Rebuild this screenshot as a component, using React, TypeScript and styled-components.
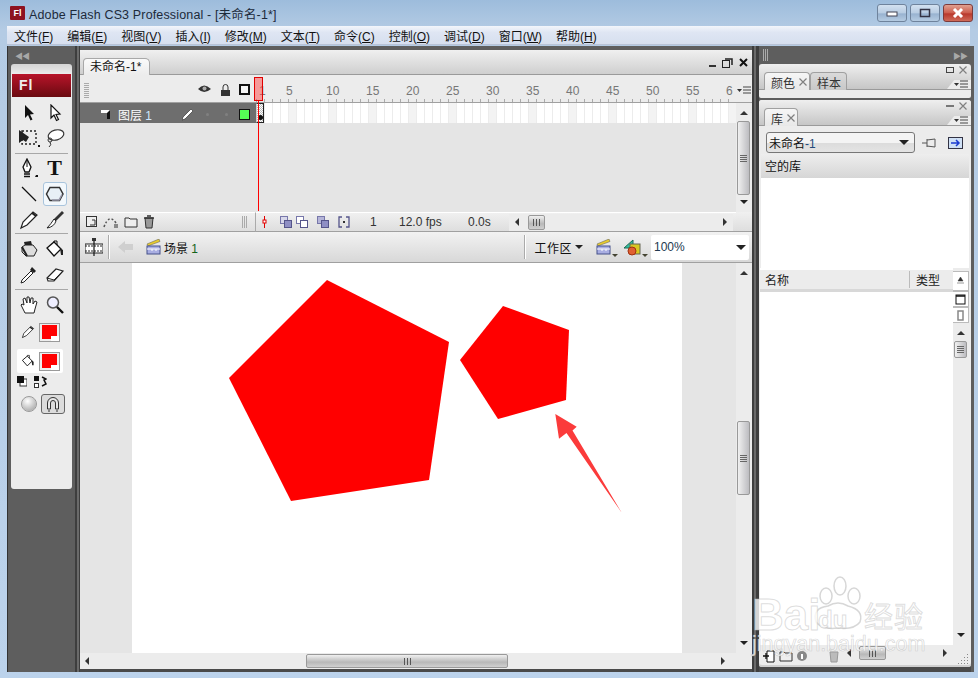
import React from "react";
import styled, { createGlobalStyle } from "styled-components";

const GlobalStyle = createGlobalStyle`
  html, body {
    margin: 0;
    padding: 0;
    width: 978px;
    height: 678px;
    overflow: hidden;
    font-family: "Liberation Sans", "Noto Sans CJK SC", sans-serif;
  }
  * { box-sizing: border-box; }
`;

const MENUS = [
  ["文件(", "F", ")"],
  ["编辑(", "E", ")"],
  ["视图(", "V", ")"],
  ["插入(", "I", ")"],
  ["修改(", "M", ")"],
  ["文本(", "T", ")"],
  ["命令(", "C", ")"],
  ["控制(", "O", ")"],
  ["调试(", "D", ")"],
  ["窗口(", "W", ")"],
  ["帮助(", "H", ")"],
];

const RULER = [5, 10, 15, 20, 25, 30, 35, 40, 45, 50, 55, 6];

const IconSvg = styled.svg`
  display: block;
  flex: none;
`;

const Svg = ({ w = 18, h = 18, children }: { w?: number; h?: number; children: React.ReactNode }) => (
  <IconSvg width={w} height={h} viewBox={`0 0 ${w} ${h}`}>
    {children}
  </IconSvg>
);

function ArrowTool() {
  return <Svg><path d="M5 1 L5 14 L8 11 L10.5 16.5 L12.5 15.5 L10 10.5 L14 10 Z" fill="#111" /></Svg>;
}
function SubArrowTool() {
  return <Svg><path d="M5 1 L5 14 L8 11 L10.5 16.5 L12.5 15.5 L10 10.5 L14 10 Z" fill="#fff" stroke="#111" strokeWidth="1.2" /></Svg>;
}
function FreeTransformTool() {
  return (
    <Svg w={22} h={20}>
      <rect x="4" y="3" width="14" height="13" fill="none" stroke="#222" strokeDasharray="2 2" strokeWidth="1.4" />
      <path d="M1 2 L1 15 L5 12 L8 14 L11 9 Z" fill="#222" />
      <path d="M20 17 L22 17 L22 19 L20 19 Z" fill="#111" />
    </Svg>
  );
}
function LassoTool() {
  return (
    <Svg w={20} h={20}>
      <ellipse cx="11" cy="7" rx="8" ry="5" fill="#fff" stroke="#333" strokeWidth="1.2" transform="rotate(-15 11 7)" />
      <circle cx="5" cy="12" r="2" fill="none" stroke="#333" />
      <path d="M5 14 Q7 17 4 19" fill="none" stroke="#333" />
    </Svg>
  );
}
function PenTool() {
  return (
    <Svg w={20} h={20}>
      <path d="M8 1 L12 9 L10 14 L6 14 L4 9 Z" fill="#fff" stroke="#111" strokeWidth="1.3" />
      <path d="M8 2 L8 9" stroke="#111" />
      <path d="M5 16 L11 16 M5 18.5 L11 18.5" stroke="#111" strokeWidth="1.4" />
      <path d="M17 17 L19 17 L19 19 L16 19 Z" fill="#111" />
    </Svg>
  );
}
function LineTool() {
  return <Svg><path d="M2 2 L16 16" stroke="#111" strokeWidth="1.2" /></Svg>;
}
function HexTool() {
  return (
    <Svg w={20} h={18}>
      <path d="M5 2.5 L14.5 2.5 L18 9 L14.5 15.5 L5 15.5 L1.5 9 Z" fill="#e8f0f6" stroke="#333" strokeWidth="1.5" />
      <path d="M7 15 L14 15 L17 9.5" fill="none" stroke="#99a" strokeWidth="1.5" />
    </Svg>
  );
}
function PencilTool() {
  return (
    <Svg w={20} h={20}>
      <path d="M2 18 L4 12 L14 2 L18 5 L8 15 Z" fill="#fff" stroke="#222" strokeWidth="1.2" />
      <path d="M13 3 L17 6" stroke="#222" strokeWidth="2" />
    </Svg>
  );
}
function BrushTool() {
  return (
    <Svg w={20} h={20}>
      <path d="M9 9 L17 1 L19 3 L11 11 Z" fill="#333" />
      <path d="M9 9 L11 11 Q9 17 2 18 Q6 14 9 9 Z" fill="#fff" stroke="#222" />
    </Svg>
  );
}
function InkTool() {
  return (
    <Svg w={20} h={18}>
      <path d="M5 2 L12 1 L13 5 L6 6 Z" fill="#222" />
      <path d="M3 7 L6 5 L14 5 L18 10 L15 16 L7 16 L3 12 Z" fill="#ddd" stroke="#222" />
      <path d="M3 7 L8 16" stroke="#222" strokeWidth="2" />
    </Svg>
  );
}
function BucketTool() {
  return (
    <Svg w={20} h={18}>
      <path d="M2 8 L9 2 L16 9 L9 16 Z" fill="#fff" stroke="#111" strokeWidth="1.3" />
      <path d="M9 2 L9 1 L12 1 L12 5" fill="none" stroke="#111" />
      <path d="M15 8 L18 10 L18 15 L16 15 Z" fill="#222" />
    </Svg>
  );
}
function DropperTool() {
  return (
    <Svg w={20} h={20}>
      <path d="M13 2 L17 6 L15 8 L11 5 Z" fill="#222" />
      <path d="M12 6 L14 8 L5 17 L2 18 L3 15 Z" fill="#fff" stroke="#222" />
    </Svg>
  );
}
function EraserTool() {
  return (
    <Svg w={20} h={18}>
      <path d="M2 12 L11 3 L18 5 L9 15 L3 15 Z" fill="#fff" stroke="#222" strokeWidth="1.2" />
      <path d="M2 12 L9 14 L18 5" fill="none" stroke="#222" />
    </Svg>
  );
}
function HandTool() {
  return (
    <Svg w={20} h={20}>
      <path d="M6 18 L2 10 L3 9 L5 10 L4 4 L6 3 L8 8 L8 2 L10 2 L11 8 L12 3 L14 3 L14 9 L16 6 L18 7 L16 14 L15 18 Z" fill="#fff" stroke="#222" />
    </Svg>
  );
}
function ZoomTool() {
  return (
    <Svg w={20} h={20}>
      <circle cx="8" cy="7.5" r="5.5" fill="#eef" stroke="#555" strokeWidth="1.5" />
      <path d="M12 12 L18 18" stroke="#111" strokeWidth="2.4" />
    </Svg>
  );
}
function MagnetIcon() {
  return (
    <Svg w={16} h={16}>
      <path d="M2.5 13 L2.5 7 A5.5 5.5 0 0 1 13.5 7 L13.5 13 L10.5 13 L10.5 7 A2.5 2.5 0 0 0 5.5 7 L5.5 13 Z" fill="#e8e8e8" stroke="#333" />
      <path d="M3 15 L5 15 M11 15 L13 15" stroke="#333" />
    </Svg>
  );
}
function Clapper() {
  return (
    <Svg w={16} h={16}>
      <path d="M1 5 L13 0 L14 2.5 L2 7 Z" fill="#e8cc2e" stroke="#555" strokeWidth=".5" />
      <rect x="1" y="7" width="13" height="8" fill="#a9aee2" stroke="#44508a" />
      <path d="M1 10 L14 10 M6 10 L6 12 M10 10 L10 12" stroke="#fff" />
    </Svg>
  );
}
function OnionIcon({ kind }: { kind: number }) {
  const back = kind === 0 ? "#d8d8ea" : kind === 1 ? "#fff" : "#b5b5d8";
  const front = kind === 1 ? "#fff" : "#8f8fc4";
  return (
    <Svg w={13} h={12}>
      <rect x=".5" y=".5" width="7" height="7" fill={back} stroke="#7777aa" />
      <rect x="4.5" y="4.5" width="7" height="7" fill={front} stroke="#55558a" />
    </Svg>
  );
}
function MenuGlyph() {
  return (
    <Svg w={14} h={8}>
      <path d="M0 3 L5 3 L2.5 6 Z" fill="#333" />
      <path d="M6 1 L14 1 M6 4 L14 4 M6 7 L14 7" stroke="#444" />
    </Svg>
  );
}
function GreyX() {
  return (
    <Svg w={8} h={8}>
      <path d="M.5 .5 L7.5 7.5 M7.5 .5 L.5 7.5" stroke="#808080" strokeWidth="1.2" />
    </Svg>
  );
}
function PanelX() {
  return (
    <Svg w={11} h={11}>
      <path d="M2 2 L9 9 M9 2 L2 9" stroke="#111" strokeWidth="2" />
    </Svg>
  );
}

const Window = styled.div`
  position: relative;
  width: 978px;
  height: 678px;
  display: flex;
  flex-direction: column;
  background: linear-gradient(180deg, #9dbcdc 0, #b4cbe4 30px, #bcd3ec 100%);
`;

const TitleBar = styled.div`
  height: 26px;
  display: flex;
  align-items: center;
  padding: 0 5px 0 10px;
`;

const AppIcon = styled.div`
  width: 15px;
  height: 14px;
  background: #8e1220;
  color: #fff;
  font-size: 9px;
  font-weight: 700;
  line-height: 14px;
  text-align: center;
  border-radius: 1px;
`;

const TitleText = styled.div`
  margin-left: 4px;
  font-size: 12.5px;
  letter-spacing: 0.15px;
  color: #1c2a3a;
  flex: 1;
`;

const WinButtons = styled.div`
  display: flex;
  gap: 3px;
`;

const WinButton = styled.div<{ $close?: boolean }>`
  width: 30px;
  height: 18px;
  border: 1px solid ${({ $close }) => ($close ? "#7c3a3a" : "#6f839c")};
  border-radius: 3px;
  background: ${({ $close }) =>
    $close
      ? "linear-gradient(180deg, #e0a090 0, #cc5c4c 50%, #b8382c 55%, #cf6a58 100%)"
      : "linear-gradient(180deg, #d3e1f0 0, #b8cce2 50%, #98b2d0 55%, #b5cbe2 100%)"};
  display: flex;
  align-items: center;
  justify-content: center;
`;

const MenuBar = styled.div`
  height: 19px;
  margin: 0 8px 0 7px;
  padding-left: 7px;
  display: flex;
  align-items: center;
  gap: 14px;
  background: linear-gradient(180deg, #f3f6fb 0, #dfe6f3 35%, #d6dfef 100%);
  font-size: 12px;
  color: #111;
  border-bottom: 1px solid #b9c3d6;
`;

const MenuItem = styled.span`
  white-space: nowrap;
  u { text-underline-offset: 1px; }
`;

const Workspace = styled.div`
  margin: 1px 4px 0 7px;
  height: 626px;
  display: flex;
  background: #5e5e5e;
  border-left: 1px solid #333;
`;

const LeftDock = styled.div`
  width: 67px;
  flex: none;
  padding: 0 3px;
  display: flex;
  flex-direction: column;
`;

const DockStrip = styled.div`
  height: 18px;
  display: flex;
  align-items: center;
  justify-content: space-between;
  color: #a8a8a8;
  font-size: 8px;
  letter-spacing: -1px;
  padding: 0 4px;
`;

const Toolbox = styled.div`
  height: 425px;
  background: #ececec;
  border-radius: 3px;
  padding-top: 10px;
  background-image: linear-gradient(180deg, #d4d4d4 0, #ececec 10px);
`;

const FlLogo = styled.div`
  height: 23px;
  margin: 0 1px 3px;
  background: linear-gradient(180deg, #b8142a 0, #6a0a10 100%);
  color: #eee;
  font-size: 14px;
  font-weight: 700;
  line-height: 23px;
  padding-left: 7px;
  letter-spacing: 1px;
`;

const ToolGrid = styled.div<{ $row?: number }>`
  display: grid;
  grid-template-columns: 26px 26px;
  grid-auto-rows: ${({ $row }) => $row ?? 26}px;
  justify-content: center;
  justify-items: center;
  align-items: center;
`;

const ToolSep = styled.div<{ $top: number; $bottom: number }>`
  height: 1px;
  margin: ${({ $top }) => $top}px 4px ${({ $bottom }) => $bottom}px;
  background: #a8a8a8;
`;

const Tool = styled.div<{ $active?: boolean; $pressed?: boolean }>`
  width: 24px;
  height: ${({ $pressed }) => ($pressed ? 20 : 24)}px;
  display: flex;
  align-items: center;
  justify-content: center;
  border-radius: 3px;
  border: 1px solid ${({ $active, $pressed }) => ($active ? "#a9c4dc" : $pressed ? "#666" : "transparent")};
  background: ${({ $active, $pressed }) => ($active ? "#f3f8fc" : $pressed ? "#dcdcdc" : "transparent")};
`;

const TypeTool = styled.span`
  font-family: "Liberation Serif", serif;
  font-size: 22px;
  font-weight: 700;
  line-height: 22px;
  color: #111;
`;

const SwatchRow = styled.div<{ $white?: boolean; $top: number }>`
  height: 24px;
  margin: ${({ $top }) => $top}px 9px 0 6px;
  padding-left: 4px;
  display: flex;
  align-items: center;
  gap: 4px;
  border-radius: 2px;
  background: ${({ $white }) => ($white ? "#fff" : "transparent")};
  svg {
    width: 14px;
    height: 14px;
  }
`;

const Swatch = styled.div`
  width: 21px;
  height: 19px;
  border: 1px solid #9a9a9a;
  background: #ededed;
  padding: 1px 2px 2px;
  position: relative;
  &::before {
    content: "";
    display: block;
    width: 100%;
    height: 100%;
    background: #f00;
  }
  &::after {
    content: "";
    position: absolute;
    right: 0;
    bottom: 0;
    width: 8px;
    height: 5px;
    background: conic-gradient(from 135deg at 50% 100%, #111 0 90deg, transparent 0) center / 6px 3px no-repeat, #fff;
  }
`;

const MiniRow = styled.div`
  display: flex;
  gap: 7px;
  padding: 3px 0 0 6px;
  height: 17px;
`;

const Options = styled.div`
  display: flex;
  justify-content: center;
  align-items: center;
  gap: 5px;
  height: 28px;
  padding-left: 4px;
`;

const Sphere = styled.div`
  width: 14px;
  height: 14px;
  border-radius: 50%;
  background: radial-gradient(circle at 40% 30%, #fff, #999);
  outline: 1px solid #999;
`;

const Gutter = styled.div<{ $w: number }>`
  width: ${({ $w }) => $w}px;
  flex: none;
  background: linear-gradient(90deg, #3e3e3e 0 2px, #6a6a6a 2px 4px, #3e3e3e 4px 100%);
`;

const DocColumn = styled.div`
  width: 672px;
  flex: none;
  padding-top: 4px;
  display: flex;
  flex-direction: column;
  height: 100%;
`;

const DocTabs = styled.div`
  height: 25px;
  display: flex;
  align-items: flex-end;
  padding-left: 3px;
  background: linear-gradient(180deg, #f0f0f0 0, #cfcfcf 100%);
  border-bottom: 1px solid #9a9a9a;
`;

const DocTab = styled.div`
  width: 67px;
  height: 17px;
  background: linear-gradient(180deg, #fafafa 0, #ececec 100%);
  border: 1px solid #a8a8a8;
  border-bottom: none;
  border-radius: 4px 5px 0 0;
  font-size: 12px;
  line-height: 16px;
  padding-left: 6px;
  margin-bottom: -1px;
  color: #111;
`;

const PanelControls = styled.div`
  margin-left: auto;
  display: flex;
  align-items: center;
  gap: 5px;
  align-self: center;
  padding-right: 3px;
`;

const Timeline = styled.div`
  display: grid;
  grid-template-columns: 176px 480px 16px;
  grid-template-rows: 28px 20px 89px 20px;
  position: relative;
  background: #e5e5e5;
`;

const HeadLeft = styled.div`
  background: #ececec;
  border-bottom: 1px solid #a0a0a0;
  display: flex;
  align-items: center;
  padding: 2px 0 0 4px;
  gap: 8px;
`;

const Grip = styled.div`
  width: 5px;
  height: 12px;
  background: repeating-linear-gradient(90deg, #aaa 0 1px, transparent 1px 2px);
  flex: none;
`;

const Dotted = styled(Grip)`
  background: repeating-linear-gradient(0deg, #aaa 0 1px, transparent 1px 2px);
  margin-right: auto;
  height: 16px;
`;

const OutlineBox = styled.div`
  width: 11px;
  height: 11px;
  border: 2px solid #111;
  margin-right: 6px;
  background: #f5f5f5;
`;

const Ruler = styled.div`
  display: flex;
  background: #ececec;
  border-bottom: 1px solid #a0a0a0;
  position: relative;
  overflow: hidden;
  font-size: 12px;
  color: #777;
  padding-top: 9px;
  &::after {
    content: "";
    position: absolute;
    left: 0;
    right: 0;
    bottom: 0;
    height: 3px;
    background: repeating-linear-gradient(90deg, #aaa 0 1px, transparent 1px 8px);
  }
`;

const RulerCell = styled.div<{ $w: number; $first?: boolean }>`
  width: ${({ $w }) => $w}px;
  flex: none;
  margin-left: ${({ $first }) => ($first ? 0 : -2)}px;
  padding-left: ${({ $first }) => ($first ? 3 : 0)}px;
  margin-right: ${({ $first }) => ($first ? 0 : 2)}px;
`;

const RulerMenu = styled.div`
  background: #ececec;
  border-bottom: 1px solid #a0a0a0;
  display: flex;
  align-items: center;
  justify-content: center;
  padding-top: 3px;
`;

const LayerRow = styled.div`
  background: #6e6e6e;
  display: flex;
  align-items: center;
  padding: 2px 0 0 20px;
  color: #fff;
  font-size: 12px;
  gap: 7px;
`;

const LayerName = styled.span`
  width: 57px;
  span { color: #cfe8ff; }
`;

const Dot = styled.div`
  width: 3px;
  height: 3px;
  background: #808080;
  border-radius: 50%;
  margin: 0 4.5px;
`;

const Outline = styled.div`
  width: 11px;
  height: 11px;
  background: #55ff55;
  border: 1px solid #111;
`;

const Frames = styled.div`
  position: relative;
  background-color: #fff;
  background-image:
    repeating-linear-gradient(90deg, #ececec 0 1px, transparent 1px 8px),
    repeating-linear-gradient(90deg, transparent 0 32px, #f3f3f3 32px 40px);
`;

const Keyframe = styled.div`
  position: absolute;
  left: 0;
  top: 0;
  width: 8px;
  height: 20px;
  border: 1px solid #222;
  border-left-color: #ccc;
  background: repeating-conic-gradient(#bbb 0 25%, #fff 0 50%) 0 0 / 2px 2px;
  &::after {
    content: "";
    position: absolute;
    left: 1px;
    bottom: 2px;
    width: 5px;
    height: 5px;
    border-radius: 50%;
    background: #111;
  }
`;

const VScroll = styled.div<{ $thumbTop: number; $thumbH: number }>`
  display: flex;
  flex-direction: column;
  align-items: center;
  justify-content: space-between;
  position: relative;
  background: #ececec;
  padding: 8px 0;
  &::before {
    content: "";
    position: absolute;
    top: ${({ $thumbTop }) => $thumbTop}px;
    left: 1px;
    right: 2px;
    height: ${({ $thumbH }) => $thumbH}px;
    background: repeating-linear-gradient(180deg, #666 0 1px, transparent 1px 2px) center / 7px 7px no-repeat,
      linear-gradient(90deg, #f0f0f0, #bcbcc0);
    border: 1px solid #999;
    border-radius: 2px;
  }
`;

const TimelineScroll = styled(VScroll)`
  grid-row: 2 / 4;
  grid-column: 3;
`;

const StageScroll = styled(VScroll)`
  width: 16px;
  flex: none;
`;

const ArrowUp = styled.i`
  width: 0;
  height: 0;
  border-left: 4px solid transparent;
  border-right: 4px solid transparent;
  border-bottom: 4px solid #333;
`;

const ArrowDown = styled.i<{ $big?: boolean }>`
  width: 0;
  height: 0;
  flex: none;
  border-left: ${({ $big }) => ($big ? 5 : 4)}px solid transparent;
  border-right: ${({ $big }) => ($big ? 5 : 4)}px solid transparent;
  border-top: ${({ $big }) => ($big ? 5 : 4)}px solid #222;
`;

const TinyDown = styled.i`
  width: 0;
  height: 0;
  flex: none;
  align-self: flex-end;
  margin-bottom: 5px;
  border-left: 3px solid transparent;
  border-right: 3px solid transparent;
  border-top: 3px solid #443;
`;

const ArrowLeft = styled.i`
  width: 0;
  height: 0;
  flex: none;
  border-top: 4px solid transparent;
  border-bottom: 4px solid transparent;
  border-right: 4px solid #333;
`;

const ArrowRight = styled.i<{ $gap?: string }>`
  width: 0;
  height: 0;
  flex: none;
  margin-left: ${({ $gap }) => $gap ?? "0"};
  border-top: 4px solid transparent;
  border-bottom: 4px solid transparent;
  border-left: 4px solid #333;
`;

const EmptyLayers = styled.div`
  grid-column: 1 / 3;
  background: #e5e5e5;
`;

const FootLeft = styled.div`
  background: linear-gradient(180deg, #f0f0f0 0, #dedede 100%);
  border-top: 1px solid #fff;
  border-bottom: 1px solid #a0a0a0;
  border-right: 1px solid #aaa;
  display: flex;
  align-items: center;
  padding-left: 6px;
  gap: 5px;
`;

const FootGrip = styled(Grip)`
  margin-left: auto;
  margin-right: 8px;
`;

const FootMid = styled.div`
  background: linear-gradient(180deg, #f0f0f0 0, #dedede 100%);
  border-top: 1px solid #fff;
  border-bottom: 1px solid #a0a0a0;
  display: flex;
  align-items: center;
  font-size: 12px;
  color: #333;
`;

const FootMarker = styled.div`
  width: 5px;
  margin: 0 13px 0 6px;
  flex: none;
`;

const Onions = styled.div`
  display: flex;
  gap: 8px;
  width: 90px;
  flex: none;
  & > svg:first-child {
    margin-right: -5px;
  }
`;

const FootText = styled.span<{ $w: number }>`
  width: ${({ $w }) => $w}px;
  flex: none;
  white-space: nowrap;
`;

const HScroll = styled.div`
  width: 224px;
  height: 17px;
  background: #ececec;
  display: flex;
  align-items: center;
  justify-content: space-between;
  padding: 0 6px;
  position: relative;
  flex: none;
`;

const HThumb = styled.div<{ $left: number; $w: number }>`
  position: absolute;
  top: 1px;
  bottom: 1px;
  left: ${({ $left }) => $left}px;
  width: ${({ $w }) => $w}px;
  border: 1px solid #999;
  border-radius: 2px;
  background: repeating-linear-gradient(90deg, #555 0 1px, transparent 1px 3px) center / 7px 7px no-repeat,
    linear-gradient(180deg, #f0f0f0, #b8b8b8 60%, #d0d0d0);
`;

const FootRight = styled.div`
  background: linear-gradient(180deg, #f0f0f0 0, #dedede 100%);
  border-bottom: 1px solid #a0a0a0;
`;

const EditBar = styled.div`
  height: 31px;
  display: flex;
  align-items: center;
  background: linear-gradient(180deg, #f2f2f2 0, #d8d8d8 100%);
  border-bottom: 1px solid #a0a0a0;
  padding-left: 5px;
  font-size: 12px;
  color: #111;
`;

const BarDivider = styled.div`
  width: 1px;
  height: 24px;
  background: #aaa;
  box-shadow: 1px 0 #fff;
  margin: 0 9px 0 5px;
  flex: none;
`;

const Spacer = styled.span<{ $w: number }>`
  width: ${({ $w }) => $w}px;
  flex: none;
`;

const SceneLabel = styled.span`
  margin-left: 2px;
  flex: 1;
  span { color: #13631a; }
`;

const WorkspaceLabel = styled.span`
  margin-right: 3px;
  letter-spacing: 0.5px;
`;

const ZoomBox = styled.div`
  width: 98px;
  height: 25px;
  margin: 0 3px;
  background: #fff;
  font-size: 12px;
  display: flex;
  align-items: center;
  justify-content: space-between;
  padding: 0 3px;
  color: #23394f;
  border-radius: 2px;
`;

const StageRow = styled.div`
  display: flex;
  height: 390px;
`;

const Pasteboard = styled.div`
  width: 656px;
  flex: none;
  background: #e5e5e5;
  padding-left: 52px;
`;

const Paper = styled.div`
  width: 550px;
  height: 390px;
  background: #fff;
`;

const StageArt = styled.svg`
  display: block;
`;

const StageBottom = styled.div`
  height: 16px;
  background: #ececec;
  position: relative;
  display: flex;
  align-items: center;
  justify-content: space-between;
  padding: 0 27px 0 5px;
`;

const DocFloor = styled.div`
  flex: 1;
  background: #4a4a4a;
`;

const RightDock = styled.div`
  width: 215px;
  flex: none;
  display: flex;
  flex-direction: column;
  background: #5e5e5e;
  padding-right: 3px;
`;

const PanelHead = styled.div`
  height: 26px;
  flex: none;
  background: linear-gradient(180deg, #efefef 0, #c6c6c6 100%);
  border-radius: 3px 3px 0 0;
  display: flex;
  align-items: flex-end;
  padding-left: 5px;
  position: relative;
  border-bottom: 1px solid #9a9a9a;
`;

const PanelTab = styled.div<{ $active?: boolean; $w: number }>`
  width: ${({ $w }) => $w}px;
  height: 18px;
  background: ${({ $active }) => ($active ? "linear-gradient(180deg, #f6f6f6, #e8e8e8)" : "linear-gradient(180deg, #dadada, #c8c8c8)")};
  border: 1px solid #a0a0a0;
  border-bottom: none;
  border-radius: 4px 4px 0 0;
  margin-bottom: -1px;
  font-size: 12px;
  padding: 1px 0 0 6px;
  color: #333;
  display: flex;
  gap: 4px;
  align-items: center;
`;

const PanelCorner = styled.div`
  position: absolute;
  right: 4px;
  top: 2px;
  display: flex;
  gap: 5px;
  align-items: center;
`;

const PanelMenu = styled.div`
  position: absolute;
  right: 0;
  bottom: 0;
  width: 24px;
  height: 9px;
  background: #ececec;
  display: flex;
  justify-content: flex-end;
  padding-right: 3px;
  clip-path: polygon(30% 0, 100% 0, 100% 100%, 0 100%);
`;

const ColorBody = styled.div`
  height: 8px;
  flex: none;
  background: #ececec;
  margin-bottom: 2px;
  border-radius: 0 0 2px 2px;
`;

const LibraryPanel = styled.div`
  flex: none;
  height: 567px;
  background: #ececec;
  border-radius: 3px;
  display: flex;
  flex-direction: column;
  box-shadow: inset 0 -2px #cfcfcf;
`;

const LibraryBar = styled.div`
  height: 28px;
  flex: none;
  padding: 5px 0 0 7px;
  display: flex;
  align-items: center;
`;

const LibrarySelect = styled.div`
  width: 149px;
  height: 21px;
  border: 1px solid #777;
  border-radius: 3px;
  background: linear-gradient(180deg, #f4f4f4 0, #f4f4f4 50%, #dcdcdc 55%, #e4e4e4 100%);
  font-size: 12px;
  display: flex;
  align-items: center;
  justify-content: space-between;
  padding: 0 5px 0 2px;
  color: #111;
  margin-right: 7px;
  span { color: #23497a; }
`;

const LibraryTitle = styled.div`
  height: 24px;
  flex: none;
  margin: 0 2px;
  font-size: 12px;
  line-height: 26px;
  padding-left: 4px;
  background: linear-gradient(180deg, #eeeeee 0, #d6d6d6 100%);
  color: #111;
`;

const Preview = styled.div`
  height: 90px;
  flex: none;
  margin: 0 2px;
  background: #fff;
`;

const ColHead = styled.div`
  height: 24px;
  flex: none;
  margin: 0 18px 0 1px;
  background: #ececec;
  border-top: 2px solid #fff;
  border-bottom: 3px solid #d8d8d8;
  display: flex;
  align-items: center;
  font-size: 12px;
  color: #222;
  padding-left: 5px;
`;

const ColName = styled.span`
  width: 145px;
  border-right: 1px solid #bbb;
`;

const ColType = styled.span`
  padding-left: 6px;
`;

const ListArea = styled.div`
  height: 353px;
  flex: none;
  display: flex;
  margin: 0 2px 0 1px;
`;

const ListBody = styled.div`
  flex: 1;
  background: #fff;
`;

const SideColumn = styled.div`
  width: 16px;
  flex: none;
  margin-top: -21px;
  display: flex;
  flex-direction: column;
  background: #ececec;
`;

const SideBtn = styled.div<{ $h: number }>`
  height: ${({ $h }) => $h}px;
  background: #fff;
  border: 1px solid #bbb;
  border-left: none;
  display: flex;
  align-items: center;
  justify-content: center;
  flex: none;
`;

const SideScroll = styled(VScroll)`
  flex: 1;
`;

const LibFoot = styled.div`
  height: 20px;
  flex: none;
  display: flex;
  align-items: center;
  padding-left: 4px;
  gap: 3px;
  position: relative;
  margin-top: 1px;
`;

const LibThumb = styled(HThumb)`
  top: 0;
  bottom: 6px;
`;

const FootScrollLeft = styled(ArrowLeft)`
  margin: 0 0 6px 4px;
`;

const FootScrollRight = styled(ArrowRight)`
  margin-bottom: 6px;
`;

const ResizeGrip = styled.div`
  position: absolute;
  right: 3px;
  bottom: 2px;
  width: 11px;
  height: 11px;
  background: radial-gradient(circle, #888 0 1px, transparent 1px) 0 0 / 3px 3px;
  clip-path: polygon(100% 0, 100% 100%, 0 100%);
`;

const DockPad = styled.div`
  flex: 1;
  background: #4a4a4a;
`;

const Watermark = styled.div`
  position: absolute;
  left: 752px;
  top: 574px;
  width: 190px;
  height: 90px;
  pointer-events: none;
  color: rgba(255, 255, 255, 0.78);
  -webkit-text-stroke: 1px rgba(175, 175, 175, 0.42);
`;

const MarkBai = styled.div`
  position: absolute;
  left: 0;
  top: 22px;
  font-size: 44px;
  line-height: 37px;
  font-weight: 700;
`;

const MarkJing = styled.div`
  position: absolute;
  left: 112px;
  top: 20px;
  font-size: 29px;
  letter-spacing: 1px;
`;

const MarkUrl = styled.div`
  position: absolute;
  left: 0;
  top: 60px;
  font-size: 21.5px;
  line-height: 21px;
  -webkit-text-stroke: 0.7px rgba(175, 175, 175, 0.5);
  white-space: nowrap;
`;

const MarkDu = styled.div`
  position: absolute;
  left: 66px;
  top: 32px;
  font-size: 24px;
  font-weight: 700;
`;

const PawSvg = styled.svg`
  position: absolute;
  left: 56px;
  top: 2px;
`;

const Playhead = styled.div`
  position: absolute;
  left: 174px;
  top: 2px;
  width: 9px;
  height: 24px;
  background: rgba(255, 70, 70, 0.5);
  border: 1px solid #e00000;
  &::after {
    content: "";
    position: absolute;
    left: 3px;
    top: 23px;
    width: 1px;
    height: 110px;
    background: #ff0000;
  }
`;

export default function App() {
  return (
    <>
      <GlobalStyle />
      <Window>
        <TitleBar>
          <AppIcon>Fl</AppIcon>
          <TitleText>Adobe Flash CS3 Professional - [未命名-1*]</TitleText>
          <WinButtons>
            <WinButton>
              <Svg w={12} h={8}><rect x="1" y="3" width="10" height="4" fill="#fff" stroke="#445" /></Svg>
            </WinButton>
            <WinButton>
              <Svg w={12} h={10}><rect x="1.5" y="1.5" width="9" height="7" fill="none" stroke="#334" strokeWidth="1.5" /></Svg>
            </WinButton>
            <WinButton $close>
              <Svg w={14} h={10}><path d="M3 1 L11 9 M11 1 L3 9" stroke="#fff" strokeWidth="3" /></Svg>
            </WinButton>
          </WinButtons>
        </TitleBar>
        <MenuBar>
          {MENUS.map(([a, b, c]) => (
            <MenuItem key={b}>{a}<u>{b}</u>{c}</MenuItem>
          ))}
        </MenuBar>
        <Workspace>
          <LeftDock>
            <DockStrip>◀◀</DockStrip>
            <Toolbox>
              <FlLogo>Fl</FlLogo>
              <ToolGrid $row={25}>
                <Tool><ArrowTool /></Tool>
                <Tool><SubArrowTool /></Tool>
                <Tool><FreeTransformTool /></Tool>
                <Tool><LassoTool /></Tool>
              </ToolGrid>
              <ToolSep $top={3} $bottom={1} />
              <ToolGrid>
                <Tool><PenTool /></Tool>
                <Tool><TypeTool>T</TypeTool></Tool>
                <Tool><LineTool /></Tool>
                <Tool $active><HexTool /></Tool>
                <Tool><PencilTool /></Tool>
                <Tool><BrushTool /></Tool>
              </ToolGrid>
              <ToolSep $top={0} $bottom={2} />
              <ToolGrid>
                <Tool><InkTool /></Tool>
                <Tool><BucketTool /></Tool>
                <Tool><DropperTool /></Tool>
                <Tool><EraserTool /></Tool>
              </ToolGrid>
              <ToolSep $top={1} $bottom={2} />
              <ToolGrid>
                <Tool><HandTool /></Tool>
                <Tool><ZoomTool /></Tool>
              </ToolGrid>
              <SwatchRow $top={2}>
                <PencilTool />
                <Swatch />
              </SwatchRow>
              <SwatchRow $white $top={5}>
                <BucketTool />
                <Swatch />
              </SwatchRow>
              <MiniRow>
                <Svg w={10} h={11}><rect x="3" y="3" width="7" height="7" fill="#fff" stroke="#333" /><rect width="7" height="7" fill="#111" /></Svg>
                <Svg w={13} h={12}><rect width="5" height="5" fill="#111" /><rect x=".5" y="7.5" width="4" height="4" fill="#fff" stroke="#333" /><path d="M8 1 L12 3 L10 4 L12 8 L8 10" fill="none" stroke="#111" strokeWidth="1.5" /></Svg>
              </MiniRow>
              <Options>
                <Sphere />
                <Tool $pressed><MagnetIcon /></Tool>
              </Options>
            </Toolbox>
          </LeftDock>
          <Gutter $w={5} />
          <DocColumn>
            <DocTabs>
              <DocTab>未命名-1*</DocTab>
              <PanelControls>
                <Svg w={9} h={9}><rect x="1" y="7" width="7" height="2" fill="#333" /></Svg>
                <Svg w={11} h={11}><rect x=".5" y="3.5" width="7" height="7" fill="none" stroke="#222" /><path d="M3 2 L10 2 L10 8" fill="none" stroke="#222" strokeWidth="1.5" /></Svg>
                <PanelX />
              </PanelControls>
            </DocTabs>
            <Timeline>
              <HeadLeft>
                <Dotted />
                <Svg w={15} h={11}><path d="M1 5 Q7 -2 14 5 Q7 11 1 5 Z" fill="#333" /><circle cx="7.5" cy="4.5" r="2" fill="#aaa" /></Svg>
                <Svg w={11} h={12}><path d="M3 6 L3 3 A2.5 2.5 0 0 1 8 3 L8 6" fill="none" stroke="#333" /><rect x="1" y="6" width="9" height="6" fill="#333" /></Svg>
                <OutlineBox />
              </HeadLeft>
              <Ruler>
                <RulerCell $w={32} $first>1</RulerCell>
                {RULER.map((n) => (
                  <RulerCell key={n} $w={40}>{n}</RulerCell>
                ))}
              </Ruler>
              <RulerMenu><MenuGlyph /></RulerMenu>
              <LayerRow>
                <Svg w={11} h={11}><path d="M1 1 L10 1 L10 10 L7 10 L7 4 L1 4 Z" fill="#111" /><path d="M1 1 L10 1 L7 4 L1 4 Z" fill="#fff" /></Svg>
                <LayerName>图层 <span>1</span></LayerName>
                <Svg w={12} h={14}><path d="M0 13 L1 10 L9 2 L11 4 L3 12 Z" fill="#fff" stroke="#222" strokeWidth=".6" /></Svg>
                <Dot />
                <Dot />
                <Outline />
              </LayerRow>
              <Frames>
                <Keyframe />
              </Frames>
              <TimelineScroll $thumbTop={18} $thumbH={72}>
                <ArrowUp />
                <ArrowDown />
              </TimelineScroll>
              <EmptyLayers />
              <FootLeft>
                <Svg w={12} h={12}><rect x=".5" y=".5" width="10" height="10" fill="#eee" stroke="#333" /><path d="M6 4 L9 4 L9 9 L4 9" fill="none" stroke="#333" /></Svg>
                <Svg w={16} h={12}><path d="M1 11 Q6 -3 13 7" fill="none" stroke="#555" strokeDasharray="2 2" strokeWidth="1.5" /><rect x="11" y="8" width="4" height="4" fill="#888" /></Svg>
                <Svg w={14} h={12}><path d="M1 2 L5 2 L6 3 L13 3 L13 11 L1 11 Z" fill="#eee" stroke="#333" /></Svg>
                <Svg w={12} h={14}><path d="M2 3 L10 3 L9 13 L3 13 Z" fill="#999" stroke="#333" /><path d="M1 3 L11 3 M4 1 L8 1" stroke="#333" strokeWidth="1.4" /></Svg>
                <FootGrip />
              </FootLeft>
              <FootMid>
                <FootMarker>
                  <Svg w={5} h={12}><path d="M2.5 0 L2.5 12" stroke="#e00000" /><rect x="1" y="4" width="3" height="3" fill="#fff" stroke="#e00000" /></Svg>
                </FootMarker>
                <Onions>
                  <OnionIcon kind={0} />
                  <OnionIcon kind={1} />
                  <OnionIcon kind={2} />
                  <Svg w={12} h={12}><path d="M4 1 L1 1 L1 11 L4 11 M8 1 L11 1 L11 11 L8 11" fill="none" stroke="#55558a" strokeWidth="1.3" /><rect x="5" y="5" width="2" height="2" fill="#333" /></Svg>
                </Onions>
                <FootText $w={29}>1</FootText>
                <FootText $w={69}>12.0 fps</FootText>
                <FootText $w={41}>0.0s</FootText>
                <HScroll>
                  <ArrowLeft />
                  <HThumb $left={19} $w={17} />
                  <ArrowRight />
                </HScroll>
              </FootMid>
              <FootRight />
              <Playhead />
            </Timeline>
            <EditBar>
              <Svg w={18} h={18}><rect x="0" y="6" width="18" height="9" fill="#fff" stroke="#222" /><path d="M0 8 L18 8 M0 13 L18 13" stroke="#222" strokeDasharray="2 1" /><path d="M9 1 L9 18" stroke="#111" strokeWidth="1.2" /><rect x="7" y="0" width="4" height="3" fill="#333" /></Svg>
              <BarDivider />
              <Svg w={16} h={12}><path d="M0 6 L7 0 L7 3 L15 3 L15 9 L7 9 L7 12 Z" fill="#cfcfcf" /></Svg>
              <Spacer $w={12} />
              <Clapper />
              <SceneLabel>场景 <span>1</span></SceneLabel>
              <BarDivider />
              <WorkspaceLabel>工作区</WorkspaceLabel>
              <ArrowDown />
              <Spacer $w={13} />
              <Clapper />
              <TinyDown />
              <Spacer $w={6} />
              <Svg w={18} h={17}><path d="M0 9 L9 1 L9 9 Z" fill="#33c0a0" stroke="#1a6a55" /><rect x="6" y="5" width="10" height="10" fill="#d8c820" stroke="#665" /><circle cx="8" cy="12" r="4" fill="#e06030" stroke="#a03010" /></Svg>
              <TinyDown />
              <ZoomBox>
                100%
                <ArrowDown $big />
              </ZoomBox>
            </EditBar>
            <StageRow>
              <Pasteboard>
                <Paper>
                  <StageArt width="550" height="390" viewBox="132 263 550 390">
                    <polygon points="327,280 449,342 429,480 291,501 229,378" fill="#ff0000" />
                    <polygon points="503,306 569,330 566,400 498,419 460,360" fill="#ff0000" />
                    <polygon points="555.3,414 576.7,426.7 572.5,430.5 621.7,512.7 566.5,433 559,438.7" fill="#fb3b3b" />
                  </StageArt>
                </Paper>
              </Pasteboard>
              <StageScroll $thumbTop={158} $thumbH={72}>
                <ArrowUp />
                <ArrowDown />
              </StageScroll>
            </StageRow>
            <StageBottom>
              <ArrowLeft />
              <HThumb $left={226} $w={202} />
              <ArrowRight />
            </StageBottom>
            <DocFloor />
          </DocColumn>
          <Gutter $w={7} />
          <RightDock>
            <DockStrip>
              <Grip />
              ▶▶
            </DockStrip>
            <PanelHead>
              <PanelTab $active $w={46}>颜色 <GreyX /></PanelTab>
              <PanelTab $w={37}>样本</PanelTab>
              <PanelCorner>
                <Svg w={8} h={6}><rect x=".5" y=".5" width="7" height="5" fill="none" stroke="#444" /></Svg>
                <GreyX />
              </PanelCorner>
              <PanelMenu><MenuGlyph /></PanelMenu>
            </PanelHead>
            <ColorBody />
            <LibraryPanel>
              <PanelHead>
                <PanelTab $active $w={34}>库<GreyX /></PanelTab>
                <PanelCorner>
                  <Svg w={8} h={6}><rect y="2" width="8" height="2" fill="#777" /></Svg>
                  <GreyX />
                </PanelCorner>
                <PanelMenu><MenuGlyph /></PanelMenu>
              </PanelHead>
              <LibraryBar>
                <LibrarySelect>
                  <div>未命名<span>-1</span></div>
                  <ArrowDown $big />
                </LibrarySelect>
                <Svg w={14} h={12}><path d="M0 6 L5 6 M5 2 L5 10 M5 3 L13 2 L13 10 L5 9" fill="none" stroke="#555" /></Svg>
                <Spacer $w={12} />
                <Svg w={15} h={12}><rect x=".5" y=".5" width="14" height="11" fill="#cfe0f5" stroke="#334" /><path d="M3 6 L11 6 M8 3 L11 6 L8 9" fill="none" stroke="#1a3ad0" strokeWidth="1.5" /></Svg>
              </LibraryBar>
              <LibraryTitle>空的库</LibraryTitle>
              <Preview />
              <ColHead>
                <ColName>名称</ColName>
                <ColType>类型</ColType>
              </ColHead>
              <ListArea>
                <ListBody />
                <SideColumn>
                  <SideBtn $h={20}><Svg w={9} h={8}><path d="M4.5 0 L7 4 L2 4 Z M1 6 L8 6" fill="#333" stroke="#333" strokeWidth=".5" /></Svg></SideBtn>
                  <SideBtn $h={16}><Svg w={11} h={11}><rect x="1" y="1" width="9" height="9" fill="#fff" stroke="#111" /><path d="M1 2 L10 2" stroke="#111" strokeWidth="1.5" /></Svg></SideBtn>
                  <SideBtn $h={16}><Svg w={7} h={11}><rect x="1" y="1" width="5" height="9" fill="#fff" stroke="#888" strokeWidth="1.5" /></Svg></SideBtn>
                  <SideScroll $thumbTop={18} $thumbH={15}>
                    <ArrowUp />
                    <ArrowDown />
                  </SideScroll>
                </SideColumn>
              </ListArea>
              <LibFoot>
                <Svg w={13} h={14}><path d="M4 2 L11 2 L11 13 L4 13 Z" fill="#fff" stroke="#111" /><path d="M0 7 L6 7 M3 4 L3 10" stroke="#111" strokeWidth="1.3" /></Svg>
                <Svg w={14} h={12}><path d="M1 2 L5 2 L6 3 L13 3 L13 11 L1 11 Z" fill="#eee" stroke="#333" /></Svg>
                <Svg w={12} h={12}><circle cx="6" cy="6" r="5" fill="#888" /><rect x="5" y="4" width="2" height="5" fill="#fff" /></Svg>
                <Spacer $w={14} />
                <Svg w={12} h={14}><path d="M2 3 L10 3 L9 13 L3 13 Z" fill="#bbb" stroke="#999" /></Svg>
                <FootScrollLeft />
                <LibThumb $left={100} $w={27} />
                <FootScrollRight $gap="89px" />
                <ResizeGrip />
              </LibFoot>
            </LibraryPanel>
            <DockPad />
          </RightDock>
        </Workspace>
        <Watermark>
          <PawSvg width="60" height="56" viewBox="0 0 60 56">
            <g fill="rgba(255,255,255,.7)" stroke="rgba(175,175,175,.5)" strokeWidth="1.5">
              <ellipse cx="18" cy="20" rx="6" ry="8" />
              <ellipse cx="32" cy="10" rx="6" ry="9" />
              <ellipse cx="46" cy="20" rx="6" ry="8" />
              <path d="M8 46 Q4 32 20 30 Q30 24 40 30 Q56 34 52 46 Q46 54 30 52 Q14 54 8 46 Z" />
            </g>
          </PawSvg>
          <MarkBai>Bai</MarkBai>
          <MarkDu>du</MarkDu>
          <MarkJing>经验</MarkJing>
          <MarkUrl>jingyan.baidu.com</MarkUrl>
        </Watermark>
      </Window>
    </>
  );
}
